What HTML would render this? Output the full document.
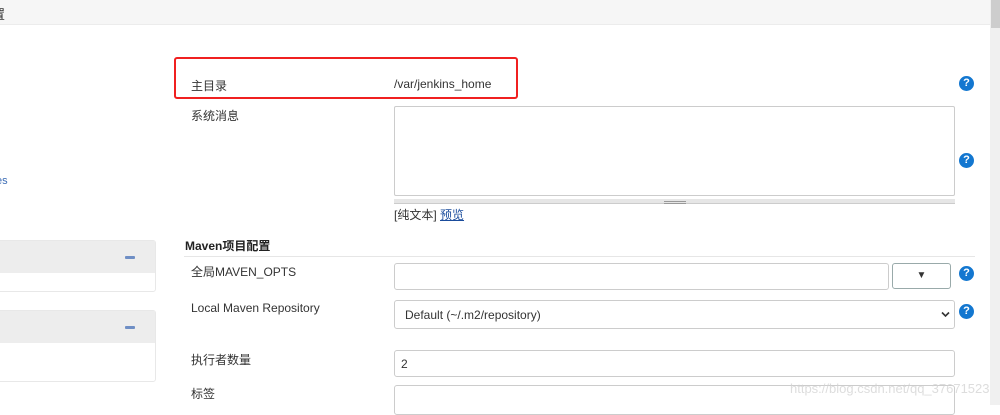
<!DOCTYPE html>
<html><head><meta charset="utf-8"><style>
*{box-sizing:border-box;margin:0;padding:0}
body{width:1000px;height:405px;overflow:hidden;background:#fff;position:relative;font-family:"Liberation Sans","Noto Sans CJK SC",sans-serif;font-size:12px;color:#333}
.a{position:absolute}
.lbl{position:absolute;left:191px;font-size:12px;color:#333}
.inp{position:absolute;border:1px solid #ccc;border-radius:3px;background:#fff}
.q{position:absolute;width:15px;height:15px;border-radius:50%;background:#1377d0;color:#fff;font-weight:bold;font-size:11px;line-height:15px;text-align:center;font-family:"Liberation Sans",sans-serif}
.panel{position:absolute;left:-5px;width:161px;border:1px solid #e8e8e8;border-radius:3px}
.panel .h{height:32px;background:#ededed;position:relative}
.panel .h i{position:absolute;left:129px;top:15px;width:10px;height:3px;background:#6f8fc5;border-radius:1px}
</style></head><body>
<div class="a" style="left:0;top:0;width:990px;height:25px;background:#f6f6f6;border-bottom:1px solid #ececec"></div>
<div class="a" style="left:-8px;top:4px;font-size:13px;color:#333">置</div>
<div class="a" style="left:990px;top:0;width:10px;height:405px;background:#f0f0f0"></div>
<div class="a" style="left:991px;top:0;width:9px;height:28px;background:#cdcdcd"></div>

<div class="a" style="left:-4px;top:175px;color:#3b6cb5;font-size:11px">es</div>
<div class="panel" style="top:240px;height:52px"><div class="h"><i></i></div></div>
<div class="panel" style="top:310px;height:72px"><div class="h"><i></i></div></div>

<div class="a" style="left:174px;top:57px;width:344px;height:42px;border:2px solid #f02020;border-radius:3px"></div>
<div class="lbl" style="top:77px">主目录</div>
<div class="a" style="left:394px;top:77px">/var/jenkins_home</div>
<div class="q" style="left:959px;top:76px">?</div>

<div class="lbl" style="top:107px">系统消息</div>
<div class="inp" style="left:394px;top:106px;width:561px;height:90px;border-radius:2px"></div>
<div class="a" style="left:394px;top:199px;width:561px;height:5px;background:#e6e6e6;border-bottom:1px solid #ccc"></div>
<div class="a" style="left:664px;top:201px;width:22px;height:1px;background:#999"></div>
<div class="a" style="left:664px;top:203px;width:22px;height:1px;background:#999"></div>
<div class="q" style="left:959px;top:153px">?</div>
<div class="a" style="left:394px;top:206px">[纯文本] <span style="color:#1a4c9c;text-decoration:underline">预览</span></div>

<div class="a" style="left:185px;top:237px;font-weight:bold;font-size:12px;color:#222">Maven项目配置</div>
<div class="a" style="left:184px;top:256px;width:791px;height:1px;background:#e6e6e6"></div>

<div class="lbl" style="top:263px">全局MAVEN_OPTS</div>
<div class="inp" style="left:394px;top:263px;width:495px;height:27px"></div>
<div class="inp" style="left:892px;top:263px;width:59px;height:26px;border:1px solid #9aa;border-radius:3px;text-align:center;line-height:24px;font-size:10px;color:#333">▼</div>
<div class="q" style="left:959px;top:266px">?</div>

<div class="lbl" style="top:301px">Local Maven Repository</div>
<div class="inp" style="left:394px;top:300px;width:561px;height:29px;padding:7px 10px;color:#333">Default (~/.m2/repository)</div>
<svg class="a" style="left:941px;top:311px" width="9" height="7"><path d="M1 1.5L4.5 5 8 1.5" fill="none" stroke="#333" stroke-width="1.6"/></svg>
<div class="q" style="left:959px;top:304px">?</div>

<div class="lbl" style="top:351px">执行者数量</div>
<div class="inp" style="left:394px;top:350px;width:561px;height:27px;padding:6px 6px">2</div>
<div class="lbl" style="top:385px">标签</div>
<div class="inp" style="left:394px;top:385px;width:561px;height:30px"></div>
<div class="a" style="left:790px;top:381px;font-size:13px;color:rgba(210,210,210,0.75)">https://blog.csdn.net/qq_37671523</div>
</body></html>
